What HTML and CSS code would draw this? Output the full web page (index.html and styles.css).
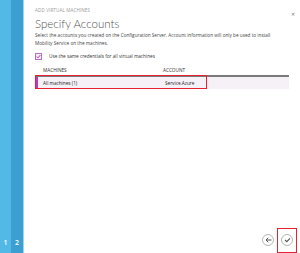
FILE: index.html
```html
<!DOCTYPE html>
<html>
  <head>
    <meta name="viewport" content="width=device-width, initial-scale=1">
    <link rel="stylesheet" href="styles.css">
  </head>
  <body>
    <div class="dialog">
      <div class="steps">
        <div class="step step-done"><span>1</span></div>
        <div class="step step-current"><span>2</span></div>
      </div>
      <div class="main">
        <div class="close">&#x2715;</div>
        <p class="eyebrow">ADD VIRTUAL MACHINES</p>
        <h1 class="title">Specify Accounts</h1>
        <p class="desc">Select the accounts you created on the Configuration Server. Account information will only be used to install Mobility Service on the machines.</p>
        <label class="check-row">
          <span class="checkbox">
            <svg width="5" height="5" viewBox="0 0 5 5"><path d="M0.6 2.5 L2 3.9 L4.4 1" fill="none" stroke="#a23bb0" stroke-width="0.9"/></svg>
          </span>
          <span>Use the same credentials for all virtual machines</span>
        </label>
        <div class="grid">
          <div class="grid-head">
            <span class="col-machine">MACHINES</span>
            <span class="col-account">ACCOUNT</span>
          </div>
          <div class="grid-row">
            <span class="col-machine">All machines (1)</span>
            <span class="col-account">Service.Azure</span>
          </div>
          <div class="highlight"></div>
        </div>
        <div class="spacer"></div>
        <div class="footer">
          <span class="nav-btn back">
            <svg width="7" height="6" viewBox="0 0 7 6"><path d="M6.5 3 H1 M3.2 0.8 L1 3 L3.2 5.2" fill="none" stroke="#555" stroke-width="1"/></svg>
          </span>
          <span class="finish-wrap">
            <span class="nav-btn finish">
              <svg width="7" height="6" viewBox="0 0 7 6"><path d="M1 3 L2.8 4.7 L6 1.3" fill="none" stroke="#555" stroke-width="1.1"/></svg>
            </span>
          </span>
        </div>
      </div>
    </div>
  </body>
</html>
```

FILE: styles.css
```css
body {
  margin: 0;
  font-family: "Open Sans", "Noto Sans", sans-serif;
  background: #fff;
}

.dialog {
  display: flex;
  width: 300px;
  height: 253px;
}

.steps {
  display: flex;
  border-right: 1px solid #9fd3ee;
}

.step {
  width: 11px;
  display: flex;
  align-items: flex-end;
  justify-content: center;
  color: #fff;
  font-size: 7px;
  font-weight: 600;
  padding-bottom: 6px;
}

.step-done {
  background-color: #52b9e7;
}

.step-current {
  width: 12px;
  background-color: #3c9ed1;
}

.main {
  position: relative;
  flex: 1;
  display: flex;
  flex-direction: column;
  padding: 7px 0 0 11px;
}

.close {
  position: absolute;
  top: 11px;
  right: 5px;
  font-size: 5px;
  color: #777;
}

.eyebrow {
  margin: 0;
  font-size: 4.6px;
  line-height: 6px;
  color: #9a9a9a;
  letter-spacing: 0.1px;
}

.title {
  margin: 3px 0 0 0;
  font-family: Lato, "Open Sans", sans-serif;
  font-size: 11.5px;
  font-weight: 300;
  color: #555;
  line-height: 15px;
}

.desc {
  margin: 0;
  font-size: 4.7px;
  line-height: 8px;
  color: #444;
  width: 250px;
}

.check-row {
  display: flex;
  align-items: center;
  gap: 7px;
  margin-top: 6px;
  font-size: 4.7px;
  line-height: 7px;
  color: #333;
}

.checkbox {
  width: 5px;
  height: 5px;
  border: 1px solid #b86cc4;
  background: #f7eef8;
  display: flex;
  align-items: center;
  justify-content: center;
}

.grid {
  position: relative;
  margin-top: 7px;
  width: 254px;
}

.grid-head {
  display: flex;
  font-size: 4.7px;
  line-height: 7px;
  color: #333;
  padding-bottom: 1px;
  border-bottom: 2px solid #7a7a7a;
}

.grid-row {
  display: flex;
  align-items: center;
  height: 12px;
  background-color: #f5f1f6;
  font-size: 4.7px;
  color: #222;
  border-left: 3px solid #b53dc4;
}

.col-machine {
  width: 120px;
  padding-left: 8px;
}

.grid-row .col-machine {
  padding-left: 5px;
}

.grid-row .col-account {
  padding-left: 2px;
}

.highlight {
  position: absolute;
  left: 0;
  bottom: 0;
  width: 172px;
  height: 14px;
  box-sizing: border-box;
  border: 1.5px solid #e8212f;
}

.spacer {
  flex: 1;
}

.footer {
  display: flex;
  justify-content: flex-end;
  align-items: center;
  gap: 3px;
  padding: 0 3px 1px 0;
}

.nav-btn {
  width: 10px;
  height: 10px;
  border: 1px solid #b5b5b5;
  border-radius: 50%;
  display: flex;
  align-items: center;
  justify-content: center;
  background: #fff;
}

.finish-wrap {
  border: 1.5px solid #e8212f;
  padding: 5px 3px 6px 3px;
  margin-bottom: -1px;
}
```
